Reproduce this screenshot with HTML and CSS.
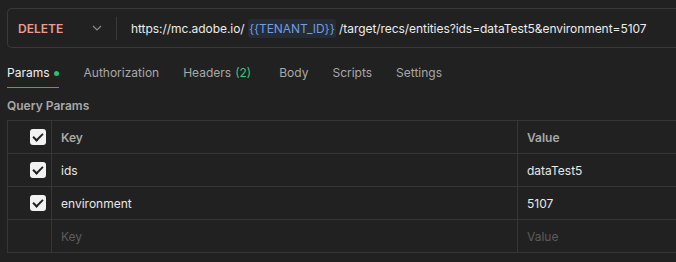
FILE: index.html
```html
<!DOCTYPE html>
<html lang="en">
<head>
  <meta charset="UTF-8">
  <title>Request</title>
  <link rel="stylesheet" href="styles.css">
</head>
<body>
  <div class="url-bar">
    <div class="method">
      <span class="method-name">DELETE</span>
      <svg class="chevron" width="10" height="6" viewBox="0 0 10 6"><path d="M1 1l4 4 4-4" fill="none" stroke="#8a8a8a" stroke-width="1.2"/></svg>
    </div>
    <div class="url">https://mc.adobe.io/ <span class="var">{{TENANT_ID}}</span> /target/recs/entities?ids=dataTest5&amp;environment=5107</div>
  </div>

  <div class="tabs">
    <div class="tab active">Params <span class="dot"></span></div>
    <div class="tab">Authorization</div>
    <div class="tab">Headers <span class="count">(2)</span></div>
    <div class="tab">Body</div>
    <div class="tab">Scripts</div>
    <div class="tab">Settings</div>
  </div>

  <div class="section-title">Query Params</div>

  <div class="params">
    <div class="row head">
      <div class="cell check"><span class="box"></span></div>
      <div class="cell key">Key</div>
      <div class="cell value">Value</div>
    </div>
    <div class="row">
      <div class="cell check"><span class="box"></span></div>
      <div class="cell key">ids</div>
      <div class="cell value">dataTest5</div>
    </div>
    <div class="row">
      <div class="cell check"><span class="box"></span></div>
      <div class="cell key">environment</div>
      <div class="cell value">5107</div>
    </div>
    <div class="row empty">
      <div class="cell check"></div>
      <div class="cell key">Key</div>
      <div class="cell value">Value</div>
    </div>
  </div>
</body>
</html>
```

FILE: styles.css
```css
body {
  margin: 0;
  background-color: #212121;
  font-family: Inter, "Noto Sans", sans-serif;
  font-size: 12px;
  color: #e8e8e8;
  overflow: hidden;
}
.url-bar {
  display: flex;
  align-items: center;
  margin: 8px 0 0 7px;
  height: 40px;
  box-sizing: border-box;
  border: 1px solid #3a3a3a;
  border-right: none;
  border-radius: 5px 0 0 5px;
}
.method {
  display: flex;
  align-items: center;
  flex-shrink: 0;
  width: 109px;
  height: 23px;
  padding-left: 10px;
  box-sizing: border-box;
  border-right: 1px solid #3a3a3a;
}
.method-name {
  color: #f09a8e;
  font-weight: 600;
  width: 74px;
}
.chevron {
  display: block;
}
.url {
  padding-left: 14px;
  white-space: nowrap;
  color: #ececec;
  letter-spacing: -0.06px;
}
.var {
  color: #6e9fe0;
  background-color: #262c35;
  border-radius: 3px;
  padding: 2px 1px;
}
.tabs {
  display: flex;
  margin: 13px 0 0 7px;
  height: 27px;
}
.tab {
  color: #a8a8a8;
  margin-right: 24px;
  padding-top: 4px;
  box-sizing: border-box;
  display: flex;
  align-items: flex-start;
  height: 27px;
}
.tab.active {
  color: #f0f0f0;
  border-bottom: 1px solid #e0603a;
  margin-right: 25px;
}
.dot {
  width: 5px;
  height: 5px;
  border-radius: 50%;
  background-color: #2fbf71;
  margin: 6px 0 0 4px;
}
.count {
  color: #3cc27a;
  margin-left: 4px;
}
.tabs .tab:nth-child(3) {
  margin-right: 28px;
}
.section-title {
  margin: 10px 0 0 7px;
  font-weight: 600;
  color: #a8a8a8;
  height: 22px;
}
.params {
  margin-left: 7px;
  border-top: 1px solid #363636;
  border-left: 1px solid #363636;
  border-bottom: 1px solid #363636;
}
.row {
  display: flex;
  height: 32px;
  border-bottom: 1px solid #363636;
}
.row:last-child {
  border-bottom: none;
}
.cell {
  display: flex;
  align-items: center;
}
.check {
  width: 44px;
  justify-content: flex-end;
  padding-right: 5px;
  box-sizing: border-box;
  border-right: 1px solid #363636;
}
.key {
  width: 466px;
  padding-left: 9px;
  box-sizing: border-box;
  border-right: 1px solid #363636;
}
.value {
  padding-left: 9px;
}
.head .key,
.head .value {
  color: #a8a8a8;
  font-weight: 600;
}
.empty .key,
.empty .value {
  color: #5c5c5c;
}
.box {
  position: relative;
  width: 16px;
  height: 16px;
  border-radius: 3px;
  background-color: #f2f2f2;
}
.box::after {
  content: "";
  position: absolute;
  left: 5px;
  top: 2px;
  width: 4px;
  height: 8px;
  border-right: 2px solid #212121;
  border-bottom: 2px solid #212121;
  transform: rotate(45deg);
}
```
